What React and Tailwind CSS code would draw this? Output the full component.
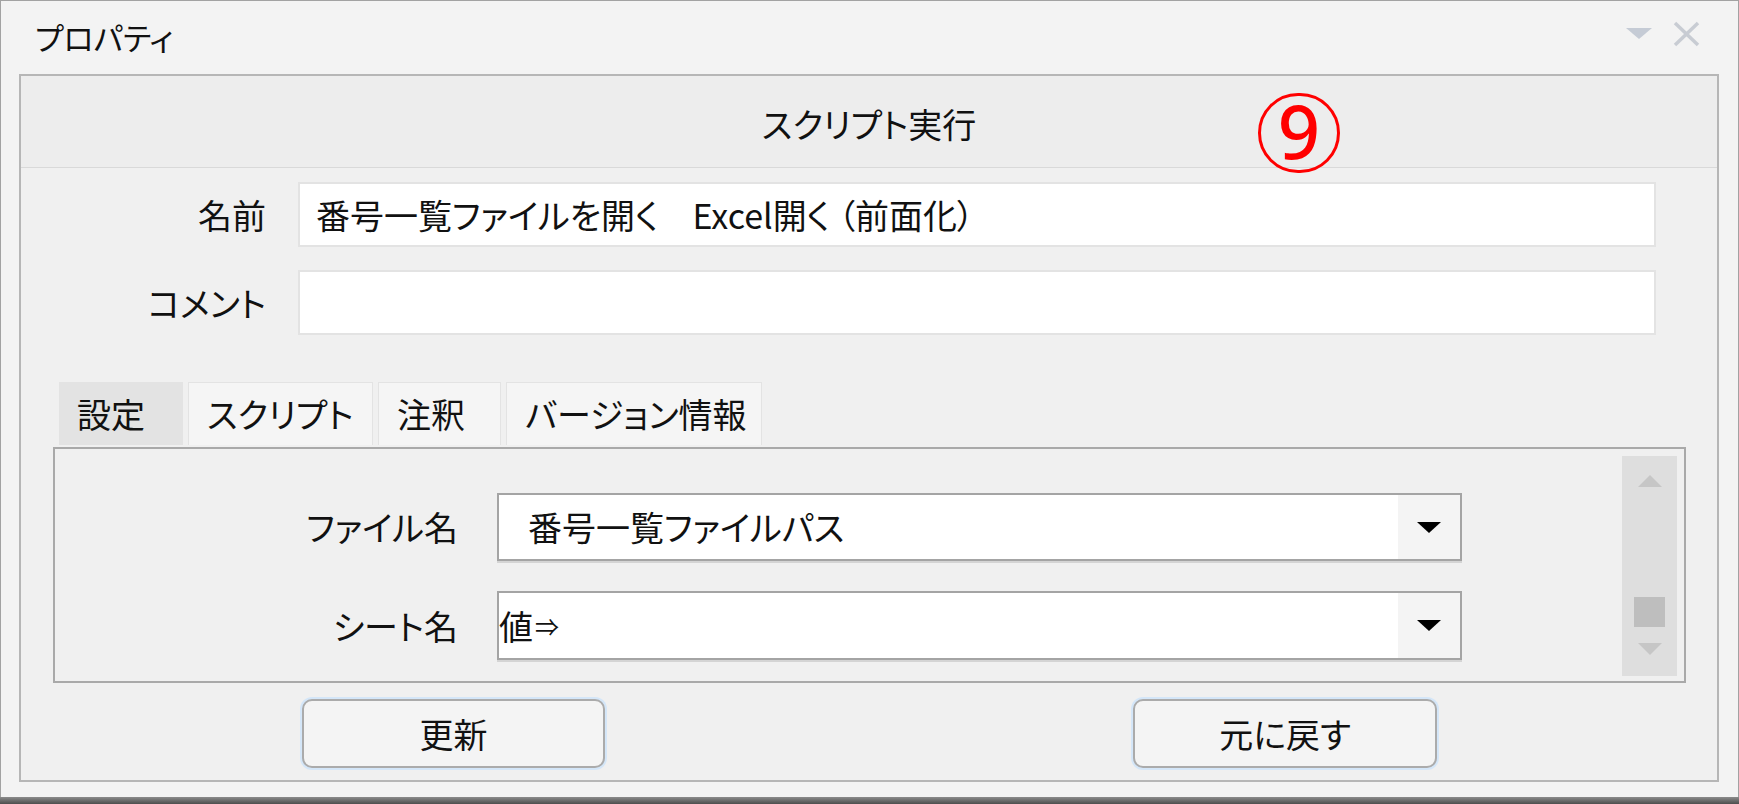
import React from "react";

const jp = "font-['Noto_Sans_CJK_JP','Noto_Sans',sans-serif] [font-feature-settings:'palt']";

const Combo = ({ value, first }) => (
  <div
    className={
      "w-[965px] bg-white border-2 border-[#a4a4a4] shadow-[0_2px_0_#d4d4d4] flex items-stretch " +
      (first ? "h-[68px]" : "h-[69px]")
    }
  >
    <div className={"flex-1 flex items-center " + (first ? "pl-[29px]" : "pl-[0px]")}>
      {value}
    </div>
    <div className="w-[62px] bg-[#f4f4f4] flex items-center justify-center">
      <svg width="24" height="11" viewBox="0 0 24 11">
        <polygon points="0,0 24,0 12,11" fill="#000" />
      </svg>
    </div>
  </div>
);

const Tab = ({ label, width, active }) => (
  <div
    className={
      "h-full flex items-center pl-[18px] " +
      width +
      (active ? " bg-[#e3e3e3]" : " bg-[#f5f5f5] border border-b-0 border-[#e3e3e3]")
    }
  >
    {label}
  </div>
);

const Button = ({ label, width }) => (
  <button
    className={
      "h-[69px] rounded-[10px] border-2 border-[#ababab] bg-[#f4f4f4] shadow-[0_0_0_2px_#d4e6f8] flex items-center justify-center text-[#111] " +
      width
    }
  >
    {label}
  </button>
);

export default function App() {
  return (
    <div className={"w-[1739px] h-[804px] bg-[#f3f3f3] flex flex-col text-[34px] leading-none text-[#111] " + jp}>
      <div className="h-[797px] flex flex-col border border-b-0 border-[#a2a2a2]">
        {/* title bar */}
        <div className="h-[73px] flex items-center pl-[34px] pr-[38px]">
          <div className="flex-1 pb-[2px] text-[31px]">プロパティ</div>
          <svg width="26" height="12" viewBox="0 0 26 12" className="mb-[8px]">
            <polygon points="0,0 26,0 13,11" fill="#c5cbd5" />
          </svg>
          <svg width="27" height="26" viewBox="0 0 27 26" className="ml-[21px] mb-[8px]">
            <line x1="2" y1="2" x2="25" y2="24" stroke="#c8ccd3" strokeWidth="3.5" />
            <line x1="25" y1="2" x2="2" y2="24" stroke="#c8ccd3" strokeWidth="3.5" />
          </svg>
        </div>

        {/* main panel */}
        <div className="h-[708px] ml-[18px] mr-[19px] border-2 border-[#b6b6b6] bg-[#f0f0f0] flex flex-col">
          <div className="relative h-[92px] bg-[#ededed] border-b border-[#d9d9d9] flex items-center justify-center pt-[4px]">
            スクリプト実行
            <div className="absolute z-10 left-[1237px] top-[17px] w-[82px] h-[80px] rounded-full border-[3px] border-[#ff0000] flex items-center justify-center">
              <span className="font-['Noto_Sans',sans-serif] font-medium text-[74px] leading-none text-[#ff0000] pb-[4px]">9</span>
            </div>
          </div>

          <div className="mt-[14px] flex items-center">
            <div className="w-[245px] text-right">名前</div>
            <div className="ml-[32px] w-[1358px] h-[65px] bg-white border-2 border-[#e3e3e3] flex items-center pl-[16px]">
              番号一覧ファイルを開く　Excel開く<span className="pl-[8px]">（前面化）</span>
            </div>
          </div>
          <div className="mt-[23px] flex items-center">
            <div className="w-[245px] text-right">コメント</div>
            <div className="ml-[32px] w-[1358px] h-[65px] bg-white border-2 border-[#e3e3e3]" />
          </div>

          {/* tabs */}
          <div className="mt-[47px] ml-[38px] h-[63px] flex gap-[5px]">
            <Tab label="設定" width="w-[124px]" active />
            <Tab label="スクリプト" width="w-[185px]" />
            <Tab label="注釈" width="w-[123px]" />
            <Tab label="バージョン情報" width="w-[256px]" />
          </div>

          <div className="mt-[2px] ml-[32px] w-[1633px] h-[236px] border-2 border-[#a9a9a9] flex">
            <div className="flex-1 pt-[44px] flex flex-col">
              <div className="flex items-center">
                <div className="w-[403px] text-right">ファイル名</div>
                <div className="ml-[39px]">
                  <Combo value="番号一覧ファイルパス" first />
                </div>
              </div>
              <div className="mt-[30px] flex items-center">
                <div className="w-[403px] text-right">シート名</div>
                <div className="ml-[39px]">
                  <Combo
                    value={
                      <>
                        値<span className="text-[24px] pl-[2px]">⇒</span>
                      </>
                    }
                  />
                </div>
              </div>
            </div>
            <div className="w-[55px] mt-[7px] mb-[5px] mr-[7px] bg-[#dedede] flex flex-col items-center">
              <svg width="24" height="13" viewBox="0 0 24 13" className="mt-[19px]">
                <polygon points="0,12 24,12 12,0" fill="#c6c6c6" />
              </svg>
              <div className="mt-[109px] w-[31px] h-[30px] bg-[#bebebe]" />
              <svg width="24" height="13" viewBox="0 0 24 13" className="mt-[16px]">
                <polygon points="0,0 24,0 12,12" fill="#c6c6c6" />
              </svg>
            </div>
          </div>

          <div className="mt-[16px] pl-[281px] flex gap-[528px]">
            <Button label="更新" width="w-[303px]" />
            <Button label="元に戻す" width="w-[304px]" />
          </div>
        </div>
      </div>
      <div className="h-[7px] bg-gradient-to-b from-[#8c8c8c] to-[#4e4e4e]" />
    </div>
  );
}
